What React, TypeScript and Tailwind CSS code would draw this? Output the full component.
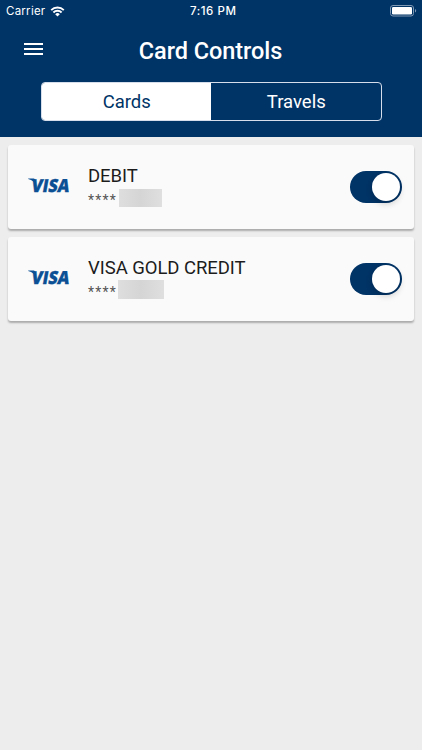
import { useState } from "react";
import clsx from "clsx";

const CARDS = [
  { id: "debit", name: "DEBIT", mask: "ml-[2px] w-[43px] h-[18px]" },
  { id: "gold", name: "VISA GOLD CREDIT", mask: "ml-px -mt-px w-[46px] h-[19px]" },
];

const TABS = ["Cards", "Travels"];

const StatusBar = () => (
  <div className="relative flex h-[22px] items-center justify-between pl-[6px] pr-[5px] font-[Inter] text-white">
    <div className="flex items-center gap-[5px]">
      <span className="text-[11.5px] leading-[22px] tracking-[0.25px]">Carrier</span>
      <svg width="15" height="11" viewBox="0 0 14 11" fill="none" stroke="white" strokeWidth="1.9">
        <path d="M0.7 4.1a9 9 0 0 1 12.6 0" />
        <path d="M2.9 6.5a5.8 5.8 0 0 1 8.2 0" />
        <path d="M7 10.6L4.7 8.2a3.3 3.3 0 0 1 4.6 0z" fill="white" stroke="none" />
      </svg>
    </div>
    <span className="absolute left-[190px] top-0 text-[11.5px] leading-[22px] font-medium tracking-[0.55px]">
      7:16 PM
    </span>
    <svg width="27" height="12" viewBox="0 0 27 12">
      <rect x="0.5" y="0.5" width="23" height="10.5" rx="2.5" fill="none" stroke="#7f98b4" />
      <rect x="2" y="2" width="20" height="7.5" rx="1.2" fill="white" />
      <path d="M25 4v3.6c1.6-.6 1.6-3 0-3.6z" fill="#7f98b4" />
    </svg>
  </div>
);

const VisaLogo = () => (
  <svg width="48" height="28" viewBox="0 0 48 28" className="-mt-[4px] shrink-0" fill="#0b4f94">
    <path d="M0.2 7.5h5c1 0 1.600.4 1.800 1.400l1.400 6C7.200 11.200 4.200 9 .2 8z" />
    <text
      x="2.5"
      y="0"
      transform="translate(0 20.5) skewX(-10)"
      textLength="38"
      lengthAdjust="spacingAndGlyphs"
      fontFamily="Open Sans, sans-serif"
      fontSize="18"
      fontWeight="800"
      stroke="#0b4f94"
      strokeWidth="0.3"
    >
      VISA
    </text>
  </svg>
);

const Toggle = ({ on, onChange }: { on: boolean; onChange: () => void }) => (
  <button
    role="switch"
    aria-checked={on}
    onClick={onChange}
    className={clsx(
      "flex h-8 w-[52px] shrink-0 items-center rounded-full p-[2px]",
      on ? "justify-end bg-[#003366]" : "justify-start bg-[#d0d0d0]"
    )}
  >
    <span className="size-7 rounded-full bg-white shadow-[0_3px_6px_rgba(0,0,0,0.18)]" />
  </button>
);

export default function App() {
  const [tab, setTab] = useState("Cards");
  const [enabled, setEnabled] = useState<Record<string, boolean>>({ debit: true, gold: true });

  return (
    <div className="min-h-screen bg-[#ededed] font-[Roboto]">
      <header className="h-[137px] bg-[#003366]">
        <StatusBar />

        {/* Title bar */}
        <div className="grid h-[60px] grid-cols-[1fr_auto_1fr] items-center pl-6 pr-[25px] text-white">
          <button aria-label="Menu" className="flex w-[19px] flex-col gap-[3px] -mt-[6px]">
            <span className="h-[2px] bg-white" />
            <span className="h-[2px] bg-white" />
            <span className="h-[2px] bg-white" />
          </button>
          <h1 className="-mt-[3px] text-[23.5px] font-medium leading-7 tracking-[-0.05px]">Card Controls</h1>
        </div>

        {/* Segmented tabs */}
        <div className="mx-auto flex h-[39px] w-[341px] overflow-hidden rounded-[4px] border border-[#d5deea]">
          {TABS.map((t) => (
            <button
              key={t}
              onClick={() => setTab(t)}
              className={clsx(
                "flex-1 pt-px pl-px text-[18.5px] leading-[36px]",
                t === tab ? "bg-white text-[#003366]" : "text-white"
              )}
            >
              {t}
            </button>
          ))}
        </div>
      </header>

      <main className="flex flex-col gap-2 px-2 pt-2">
        {CARDS.map((card) => (
          <section
            key={card.id}
            className="flex h-[84px] items-center rounded-[3px] bg-[#fafafa] pl-5 pr-[12px] shadow-[0_2px_2px_rgba(0,0,0,0.28)]"
          >
            <VisaLogo />
            <div className="ml-3 flex-1">
              <h2 className="text-[18.5px] leading-[22px] tracking-[-0.05px] text-[#1c1c1c]">{card.name}</h2>
              <div className="flex h-[22px] items-center text-[14px] text-[#555]">
                <span className="mt-[4px] leading-[18px] tracking-[1.2px]">****</span>
                <span className={clsx("bg-linear-to-r from-[#dedede] via-[#d5d5d5] to-[#dfdfdf]", card.mask)} />
              </div>
            </div>
            <Toggle
              on={enabled[card.id]}
              onChange={() => setEnabled({ ...enabled, [card.id]: !enabled[card.id] })}
            />
          </section>
        ))}
      </main>
    </div>
  );
}
